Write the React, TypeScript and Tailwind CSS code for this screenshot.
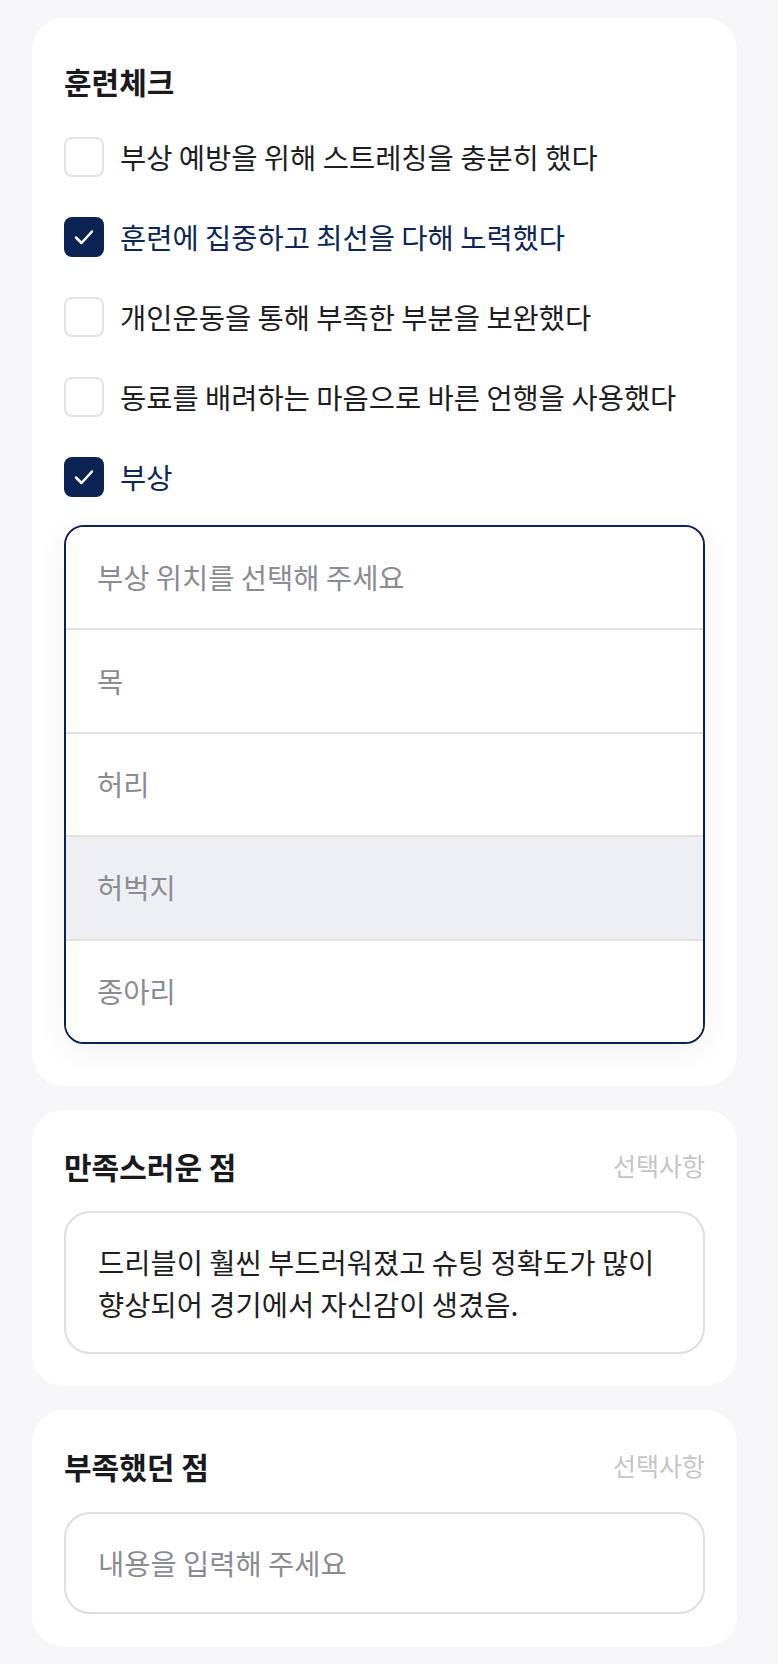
import React from "react";

const font = { fontFamily: '"Noto Sans CJK KR", "Noto Sans", sans-serif' };

function Check() {
  return (
    <svg width="26" height="26" viewBox="0 0 26 26" fill="none">
      <polyline points="5,13.5 10.5,19 21,7.5" stroke="white" strokeWidth="2.5" strokeLinecap="round" strokeLinejoin="round" />
    </svg>
  );
}

function Row({ label, checked }: { label: string; checked?: boolean }) {
  return (
    <div className="flex items-center gap-4 h-10">
      {checked ? (
        <div className="w-10 h-10 rounded-[8px] bg-[#0a2352] flex items-center justify-center shrink-0">
          <Check />
        </div>
      ) : (
        <div className="w-10 h-10 rounded-[8px] bg-white border-2 border-[#e3e3e8] shrink-0" />
      )}
      <span className={"text-[28.5px] leading-[40px] font-normal " + (checked ? "text-[#0d2657]" : "text-[#1e1e22]")}>
        {label}
      </span>
    </div>
  );
}

export default function App() {
  const options = ["부상 위치를 선택해 주세요", "목", "허리", "허벅지", "종아리"];
  return (
    <div style={font} className="bg-[#f6f6f8] min-h-[1664px] pt-[18px] pl-8 pr-[41px] pb-[18px] flex flex-col gap-6">
      <div className="bg-white rounded-[32px] px-8 pt-[44px] pb-[42px]">
        <div className="text-[30px] leading-[38px] font-bold text-[#1a1a1e]">훈련체크</div>
        <div className="mt-[37px] flex flex-col gap-10">
          <Row label="부상 예방을 위해 스트레칭을 충분히 했다" />
          <Row label="훈련에 집중하고 최선을 다해 노력했다" checked />
          <Row label="개인운동을 통해 부족한 부분을 보완했다" />
          <Row label="동료를 배려하는 마음으로 바른 언행을 사용했다" />
          <Row label="부상" checked />
        </div>
        <div className="mt-[28px] border-2 border-[#0a2352] rounded-[20px] overflow-hidden bg-white shadow-[0_6px_30px_rgba(0,0,0,0.07)]">
          {options.map((o, i) => (
            <div
              key={o}
              className={
                "flex items-center pl-[31px] text-[28.5px] text-[#8b8b95] " +
                (i > 0 ? "h-[103.4px] border-t-2 border-[#e1e1e6] " : "h-[101.4px] ") +
                (i === 3 ? "bg-[#eeeff3]" : "bg-white")
              }
            >
              {o}
            </div>
          ))}
        </div>
      </div>

      <div className="bg-white rounded-[32px] px-8 pt-[37px] pb-8">
        <div className="flex items-center justify-between">
          <div className="text-[30px] leading-[38px] font-bold text-[#1a1a1e]">만족스러운 점</div>
          <div className="text-[25px] text-[#c4c4cc]">선택사항</div>
        </div>
        <div className="mt-[26px] border-2 border-[#dedee3] rounded-[26px] px-8 py-[28px] text-[28.5px] leading-[41.6px] text-[#1f1f22]">
          드리블이 훨씬 부드러워졌고 슈팅 정확도가 많이 향상되어 경기에서 자신감이 생겼음.
        </div>
      </div>

      <div className="bg-white rounded-[32px] px-8 pt-[37px] pb-[33px]">
        <div className="flex items-center justify-between">
          <div className="text-[30px] leading-[38px] font-bold text-[#1a1a1e]">부족했던 점</div>
          <div className="text-[25px] text-[#c4c4cc]">선택사항</div>
        </div>
        <div className="mt-[27px] border-2 border-[#dedee3] rounded-[26px] px-8 py-[28px] text-[28.5px] leading-[41.6px] text-[#8b8b95]">
          내용을 입력해 주세요
        </div>
      </div>
    </div>
  );
}
